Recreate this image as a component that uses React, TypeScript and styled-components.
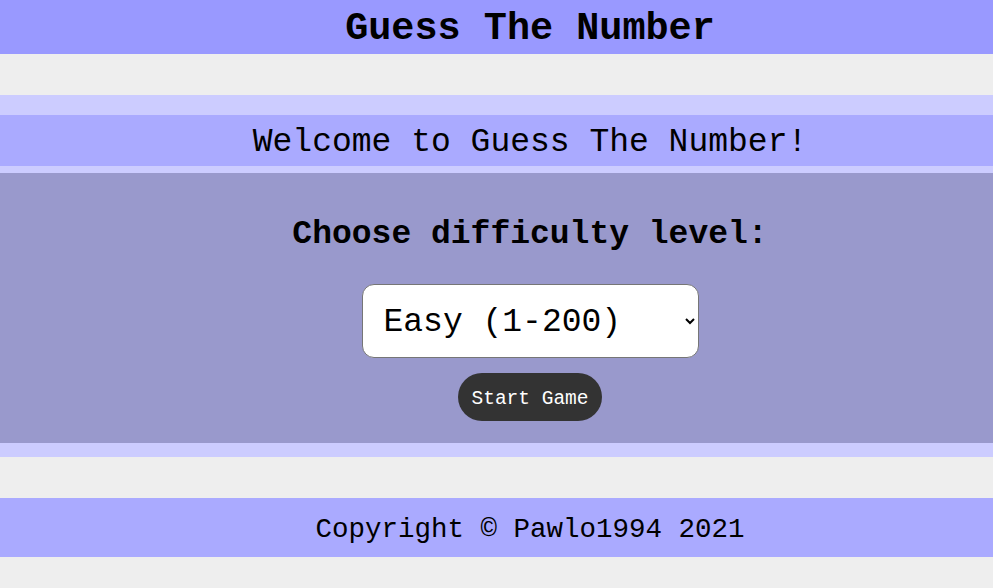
import React from 'react';
import styled, { createGlobalStyle } from 'styled-components';

const GlobalStyle = createGlobalStyle`
  *, *::before, *::after {
    box-sizing: border-box;
  }

  html, body {
    margin: 0;
    padding: 0;
    background-color: #eeeeee;
    font-family: "Liberation Mono", "DejaVu Sans Mono", monospace;
    color: #000;
  }
`

const Page = styled.div`
  display: flex;
  flex-direction: column;
  min-height: 588px;
`

// every band is centred a little right of the window middle, as in the original
const Header = styled.header`
  height: 54px;
  background-color: #9999ff;
  display: flex;
  align-items: center;
  justify-content: center;
  padding: 4px 0 0 67px;
`

const Title = styled.h1`
  margin: 0;
  font-size: 38.5px;
  font-weight: bold;
  line-height: 1;
`

const Game = styled.main`
  margin-top: 41px;
  border-top: 20px solid #ccccff;
  border-bottom: 14px solid #ccccff;
`

const Welcome = styled.div`
  height: 58px;
  background-color: #aaaaff;
  border-bottom: 7px solid #ccccff;
  display: flex;
  align-items: center;
  justify-content: center;
  padding: 4px 0 0 67px;
  font-size: 33px;
`

const Panel = styled.section`
  height: 270px;
  background-color: #9999cc;
  display: flex;
  flex-direction: column;
  align-items: center;
  padding: 42px 0 0 67px;
`

const Heading = styled.h2`
  margin: 0 0 29px;
  font-size: 33px;
  line-height: 40px;
  font-weight: bold;
`

const Select = styled.select`
  width: 337px;
  height: 74px;
  padding: 3px 12px 0 17px;
  font-family: inherit;
  font-size: 33px;
  color: #000;
  background-color: #ffffff;
  border: 1px solid #767676;
  border-radius: 12px;
  margin: 0 0 15px;
`

const StartButton = styled.button`
  width: 144px;
  height: 48px;
  border: none;
  border-radius: 24px;
  background-color: #333333;
  color: #ffffff;
  font-family: inherit;
  font-size: 19.5px;
  padding: 4px 0 0;
  cursor: pointer;
`

const Footer = styled.footer`
  margin-top: 41px;
  height: 59px;
  background-color: #aaaaff;
  display: flex;
  align-items: center;
  justify-content: center;
  padding: 4px 0 0 67px;
  font-size: 27.5px;
`

const App = () => {
  return (
    <>
      <GlobalStyle />
      <Page>
        <Header>
          <Title>Guess The Number</Title>
        </Header>
        <Game>
          <Welcome>Welcome to Guess The Number!</Welcome>
          <Panel>
            <Heading>Choose difficulty level:</Heading>
            <Select defaultValue="easy">
              <option value="easy">Easy (1-200)</option>
              <option value="medium">Medium (1-500)</option>
              <option value="hard">Hard (1-1000)</option>
            </Select>
            <StartButton>Start Game</StartButton>
          </Panel>
        </Game>
        <Footer>Copyright © Pawlo1994 2021</Footer>
      </Page>
    </>
  );
};

export default App;
